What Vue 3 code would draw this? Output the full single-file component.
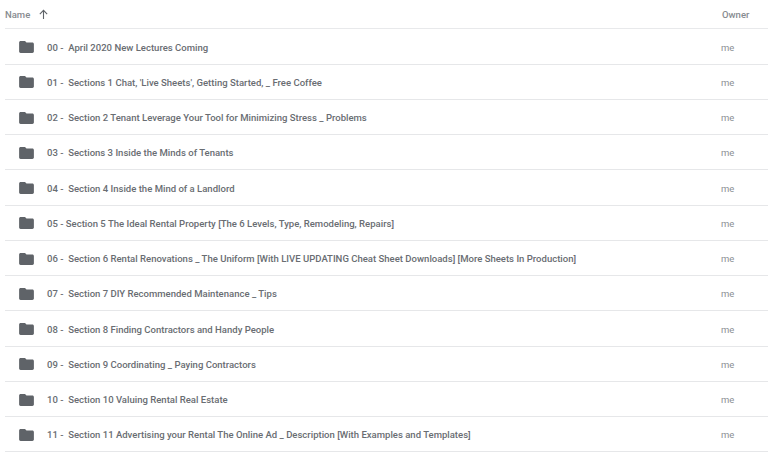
<script setup>
const rows = [
  "00 -  April 2020 New Lectures Coming",
  "01 -  Sections 1 Chat, 'Live Sheets', Getting Started, _ Free Coffee",
  "02 -  Section 2 Tenant Leverage Your Tool for Minimizing Stress _ Problems",
  "03 -  Sections 3 Inside the Minds of Tenants",
  "04 -  Section 4 Inside the Mind of a Landlord",
  "05 - Section 5 The Ideal Rental Property [The 6 Levels, Type, Remodeling, Repairs]",
  "06 -  Section 6 Rental Renovations _ The Uniform [With LIVE UPDATING Cheat Sheet Downloads] [More Sheets In Production]",
  "07 -  Section 7 DIY Recommended Maintenance _ Tips",
  "08 -  Section 8 Finding Contractors and Handy People",
  "09 -  Section 9 Coordinating _ Paying Contractors",
  "10 -  Section 10 Valuing Rental Real Estate",
  "11 -  Section 11 Advertising your Rental The Online Ad _ Description [With Examples and Templates]"
]
</script>

<template>
  <div class="list">
    <div class="head">
      <div class="head-name">
        <span>Name</span>
        <svg class="arrow" viewBox="0 0 12 12" width="11" height="11">
          <path d="M6 11V2M2 5.5 6 1.5l4 4" fill="none" stroke="#5f6368" stroke-width="1.2" />
        </svg>
      </div>
      <div class="head-owner">Owner</div>
    </div>
    <div v-for="name in rows" :key="name" class="row">
      <svg class="folder" viewBox="0 0 16 13" width="15" height="12">
        <path d="M6.4 0H1.6C.7 0 0 .7 0 1.6v9.8C0 12.3.7 13 1.6 13h12.8c.9 0 1.6-.7 1.6-1.6V3.2c0-.9-.7-1.6-1.6-1.6H8L6.4 0z" fill="#5f6368" />
      </svg>
      <div class="name">{{ name }}</div>
      <div class="owner">me</div>
    </div>
  </div>
</template>

<style>
body {
  background: #fff;
  overflow: hidden;
}
</style>

<style scoped>
.list {
  width: 768px;
  padding-left: 5px;
  box-sizing: border-box;
  font-family: Roboto, "Liberation Sans", sans-serif;
}

.head {
  display: flex;
  align-items: center;
  height: 29.4px;
  border-bottom: 1px solid #e8e9eb;
  box-sizing: border-box;
  color: #878b90;
  font-size: 9.5px;
  font-weight: 500;
}

.head-name {
  flex: 1;
  display: flex;
  align-items: center;
  gap: 8px;
}

.arrow {
  display: block;
}

.head-owner {
  width: 46px;
}

.row {
  display: flex;
  align-items: center;
  height: 35.25px;
  border-bottom: 1px solid #e6e7e9;
  box-sizing: border-box;
  padding: 1.2px 0 0 14px;
}

.folder {
  flex: none;
  display: block;
  margin-right: 13px;
}

.name {
  flex: 1;
  color: #696d72;
  font-size: 9.54px;
  font-weight: 500;
  white-space: pre;
}

.owner {
  width: 47px;
  color: #8b8f94;
  font-size: 9.5px;
}
</style>
